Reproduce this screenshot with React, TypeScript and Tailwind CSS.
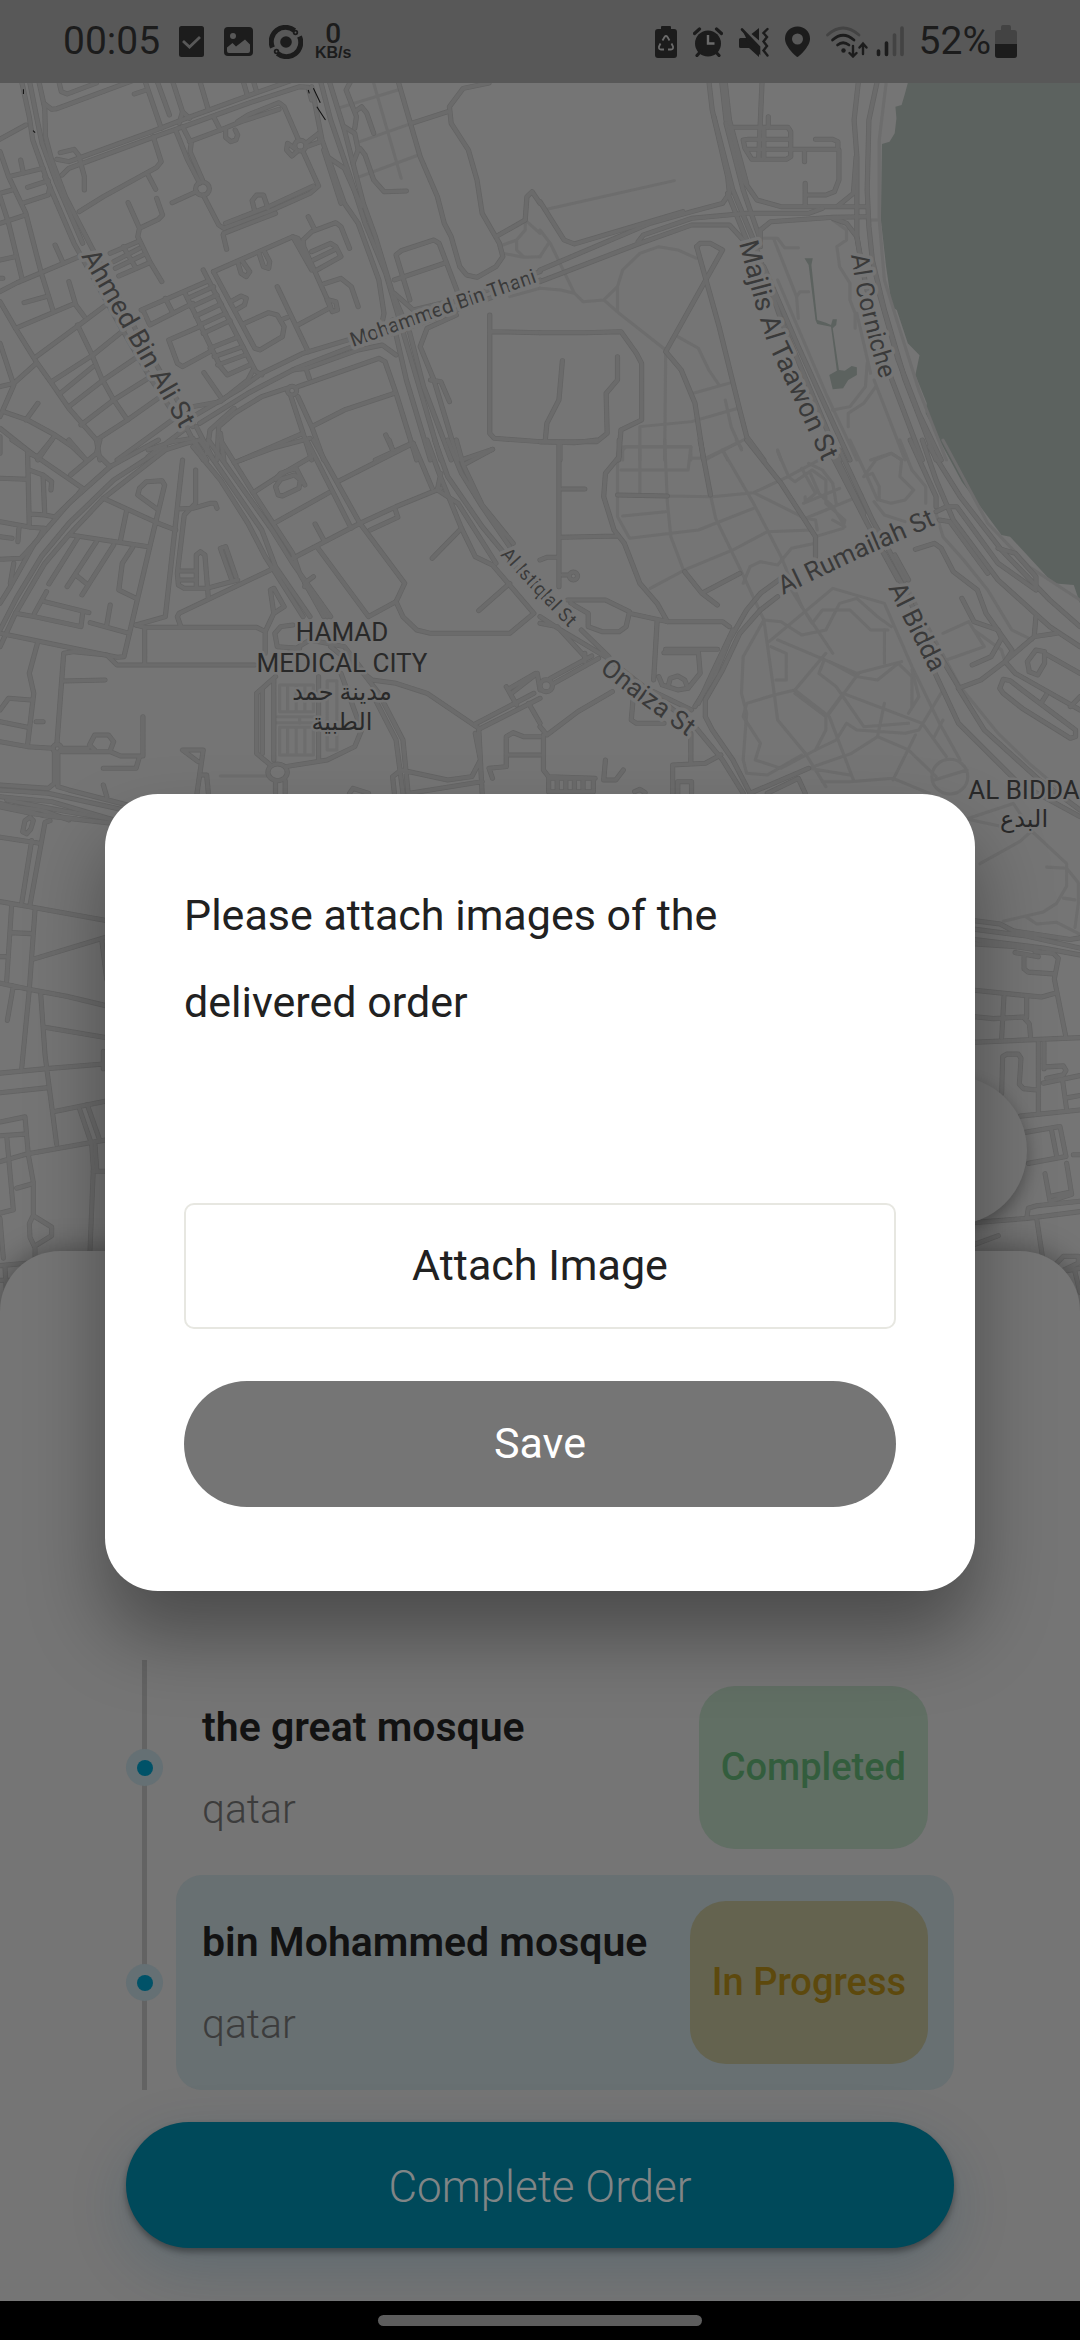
import React from "react";

type Tile = { at: string; roads: string[]; paths: string[] };

const tiles: Tile[] = [
  {
    at: "translate(0 80) scale(.3444 .3333)",
    roads: [
      "M62 0L85 110L95 180L140 310L215 490L350 740L440 900L530 1040",
      "M85 0L108 120L122 190L165 310L240 490",
      "M112 0L130 85L132 170L150 240L190 350L265 500L400 760L560 1040",
      "M-5 180L75 135M0 215L25 290L75 400L120 580L155 695M25 290L125 265M60 240L68 280",
      "M80 322L140 302M0 340L35 330M0 350L25 430L65 600M65 370L140 345L145 320L130 290M0 430L75 405",
      "M0 540L45 530M160 495L183 548M0 635L50 608L120 578L235 528M0 595H8",
      "M70 668L140 648M45 745L218 670M200 605L220 675L245 710",
      "M0 665L45 745L105 845L150 910L200 985L280 1080L290 1140",
      "M105 830L230 735L340 650M225 735L265 820L295 895L330 960L370 1020",
      "M0 790L40 915M0 920L40 910L105 850M40 915L0 1010",
      "M150 905L270 825L360 750M175 940L270 860M200 980L300 900L400 830M235 1035L330 960L430 895M280 1080L370 1020L480 940",
      "M10 995L80 1020L160 1065L210 1100L250 1140M110 970L75 1020M160 1065L110 1140M0 1045L110 1135M0 1070V1120",
      "M128 70L150 88L165 86L390 0M170 0L178 35L195 42L280 9",
      "M420 0L468 145M390 42L425 30M455 0L492 105M500 0L530 95L550 115M530 95L520 130",
      "M165 238L200 245L440 155L540 115L740 40L850 0",
      "M180 285L200 265L450 170L560 130L720 70L870 20L895 22L905 60",
      "M175 218L215 208L228 225L245 290V330M445 170L468 245L455 262L300 350L230 395",
      "M430 285L452 328M372 368L405 445M455 355L472 405L460 418L405 445L400 470L435 545L470 605",
      "M582 9L605 90M705 0L718 45M735 0L745 35M620 110L640 150",
      "M510 150L545 240L580 310M530 140L555 190L552 215L588 300",
      "M550 185L640 150L700 125L810 88M690 125L720 105L810 68L825 80L868 182M655 150V172L670 185L685 180L690 165L683 150",
      "M568 326a20 20 0 1 0 40 0a20 20 0 1 0 -40 0M856 197a16 16 0 1 0 32 0a16 16 0 1 0 -32 0",
      "M500 368L570 335M590 345L635 435L650 445L780 395L900 340L925 318L880 215",
      "M650 460L800 400M655 430L780 380L910 318M740 395L732 362L745 345L765 345L778 385M648 465L658 508",
      "M855 205L835 190L832 210L848 228L862 215M888 190L925 160L930 185L890 200",
      "M320 520L400 485M330 545L405 505M335 565L415 525M345 588L435 548M358 500L395 565",
      "M620 575L850 470L905 570M850 470L865 475L905 570M885 530L880 480L905 455L975 428L990 440L1015 505M895 410L912 445M882 500L960 680",
      "M905 515L960 490L975 500L990 530L920 570M910 540L970 510",
      "M690 545L700 580L715 590L725 575L705 545M752 520L765 560L780 565L783 545L768 515",
      "M940 612L990 595L1020 620L1040 680M950 660L965 695L980 690L975 665L955 660M865 735L955 685M805 620L895 815M815 720L835 712",
      "M620 575L740 805L755 810L820 770L825 740L805 705L780 698L710 730M670 665L700 648L715 655L710 675L685 690",
      "M590 570L740 870M410 690L600 605M535 635L640 860L660 885L725 855M480 655L500 695M415 690L435 735L560 670",
      "M545 655L620 620M555 680L630 645M568 708L642 672M580 735L655 700M590 760L668 722M610 805L690 772M622 830L705 800M632 855L712 825",
      "M580 740L490 780L515 850L530 860L610 815M592 878L640 950M560 980L640 965L720 900L735 870L760 885",
      "M560 1010L700 925L760 880L880 820L1010 780L1100 745L1568 575",
      "M580 1030L720 940L860 865L1010 805L1140 760L1568 600",
      "M850 870L890 865L1040 810L1110 795L1150 825M890 870L898 895",
      "M630 1140L635 1040L680 1000L760 950L832 925M865 920L1100 835L1118 845L1150 940L1195 1090L1210 1140M835 932a13 13 0 1 0 26 0a13 13 0 1 0 -26 0",
      "M845 950L880 1060L905 1140M865 950L905 1040L940 1140M905 1040L1000 990L1145 940M700 1140L880 1060M1120 1065L1140 1110M1090 1140L1195 1090",
      "M600 1120L610 1050L680 985M650 1140L640 1060M430 1130L560 1030M340 1140L500 1020L540 1000M430 1110L500 1085L560 1075L600 1140M540 1040L590 1140M570 1040L620 1140",
      "M905 20L935 180L1000 370L1040 430L1100 600L1115 700L1105 750",
      "M930 0L960 120L1010 270L1060 430L1120 580L1160 720L1200 860L1280 1140",
      "M955 0L1000 150L1055 370L1090 470L1140 640L1190 760L1230 920L1310 1140",
      "M950 230L1000 265L1050 380M940 210L990 370M1140 720L1180 900L1250 1140",
      "M1000 140L1030 160L1040 210L1025 250M1020 0L1005 30L1035 110L1030 145M1030 95L1050 80L1065 100L1085 160M1045 205L1060 225L1085 300L1115 335L1180 333",
      "M1155 0L1220 230L1270 350L1290 430L1310 470L1335 560L1355 585L1385 592L1440 560L1460 530L1450 490L1400 400L1385 300L1360 210L1310 130L1305 80L1345 25L1420 9",
      "M1195 130L1300 95M1440 470L1525 420L1530 350L1545 335L1568 370",
      "M1145 600L1295 548M1190 660L1150 525L1165 512L1260 480L1275 490L1330 640M1145 640L1200 690L1300 665",
      "M1325 705L1240 745L1220 800L1260 900L1330 1140M1250 900L1280 905L1305 965",
      "M1422 705V1060L1435 1075L1568 1085M1425 755L1568 758M1340 1140L1430 1108",
    ],
    paths: [
      "M980 85L1155 30M1045 185L1195 130M1045 290L1215 225M1085 9L1165 295",
      "M1460 495L1500 480L1525 450V420L1568 460M1460 520L1520 532L1568 530M1500 480V510L1520 530M1480 650L1568 625",
    ],
  },
  {
    at: "translate(540 80) scale(.3444 .3333)",
    roads: [
      "M490 0L500 90L545 290L550 340L530 370L440 395L320 430L0 570",
      "M527 0L540 120L590 300L630 360L700 380L950 380M537 0L550 120L600 310",
      "M505 110L560 330L620 480M540 130L590 330L640 480M545 340L600 480",
      "M0 605L290 490L440 435L550 435L590 480M285 485L300 465L440 415L600 400L780 400L820 385",
      "M640 500V450L670 425L850 412L950 410M850 415L890 430L920 470L930 530",
      "M925 0L912 120L920 230V470L935 560L985 800L1110 1140",
      "M980 0L955 120L950 330L955 440L965 540L1000 690L1060 900L1150 1140",
      "M918 230L910 340L865 378M985 640L1040 840L1100 1000L1165 1140",
      "M645 0L635 235M550 142L720 142L728 155V230L715 238L615 238L595 205L590 180L605 178H725M600 208H865V185L850 178H800",
      "M868 210V300L855 335L830 345H775M768 215V245M770 310V378M663 110V140M650 145V235",
      "M0 365L70 480L100 492L415 395",
      "M455 500L465 490H495L530 510L365 815L410 870L450 970L475 1140",
      "M455 500L520 740L580 990L600 1070L650 1140",
      "M0 758H130L235 755L280 820L295 850V1020L235 1050L228 1140M65 842L55 960L20 1030L15 1085M225 830V900L192 940L195 1060L165 1085H0M58 1090V1140",
      "M620 480L700 720L870 1140M650 560L750 800L860 1050L900 1140",
    ],
    paths: [
      "M20 388L390 302M0 450L30 490L100 640L125 665L185 660L230 700L365 810M185 660L225 620V690M225 620L240 570L290 520L345 500L400 510L455 535M0 625L60 630L100 640M0 530L25 490",
      "M365 810L362 1140M400 770L460 805L490 870L520 915M445 940L555 908",
      "M290 1140V1040L440 1025L575 985M240 1140V1100H438V1140M480 1140L600 1075M538 960L555 1040L585 1110M530 1110L545 1140M690 1110L700 1140M960 1140L1020 1120L1050 1140",
      "M680 480L745 650L750 715M650 475H690L710 503H750M745 650L755 635H780M690 600L830 940L920 1140",
      "M850 990L900 980L945 920L950 850M895 1040V1000L940 970L975 920M970 900L1060 1140M850 420L890 450V480L862 500L870 560L900 610V660L915 700V745M920 700L960 880",
      "M1005 9L985 180V420L1000 600L1030 700L1100 930L1180 1140M950 420H980",
    ],
  },
  {
    at: "translate(0 440) scale(.3444 .3333)",
    roads: [
      "M460 0L320 80L200 190L100 310L30 440L0 490",
      "M480 20L330 120L200 250L120 350L50 470L0 570",
      "M580 0L540 10L480 30L300 175L200 285L130 370L45 520L0 620",
      "M580 0L640 90L760 270L800 380L900 530M605 0L680 110L790 270L850 370L960 530M640 0L730 150L850 340L870 400L940 530M560 20L640 120L720 250L770 350L880 530",
      "M680 68L790 25L900 -5M735 158L830 95L905 50M795 250L955 158",
      "M890 0L1020 265M910 0L1045 250M980 125L1200 10M850 355L1045 250L1150 200L1280 145M1075 270L1155 232L1148 210M1045 250L1175 430L1150 485L1070 530M920 320L1070 530M915 252L940 300",
      "M1150 485L1170 530L1210 570L1250 580H1480L1550 520M1255 355L1340 265L1380 350L1430 375L1550 520M1390 512L1480 430",
      "M1240 0L1275 100L1340 265M1200 10L1255 145M1262 0L1300 110L1400 260L1568 470M1300 0L1340 100L1400 200L1480 320M1325 0L1345 75L1430 28M1345 75L1400 195L1490 310M1280 100L1270 150L1330 190L1440 370M1130 0L1140 30",
      "M885 440L890 425L910 410M885 430L950 530M808 165L800 140L815 118L855 105L872 120L868 145L820 168ZM800 118L815 100L860 85L885 135",
      "M80 35L85 260M35 0L240 145L225 165L160 230M0 115L80 118M85 90L125 105L130 225L165 232M125 105L150 125L148 150M90 222L130 225",
      "M0 245L90 262L130 265M0 290L35 295M55 265L52 305M0 358L60 355L110 300L125 270M80 40L110 50L150 0M205 105L280 40M40 370L30 430M290 0L280 40L320 80M200 0L250 60",
      "M300 175L460 250L510 270M460 210L400 165L405 145L425 125L470 122L478 135L435 320L360 650L340 652L0 580M368 210L350 300M205 285L430 320M225 295L142 432M280 305L195 440M330 315L238 465M220 405L250 430M385 322L355 370L345 450L395 475",
      "M530 60L480 530L395 555M568 90V190L535 225L515 400L518 435L535 445H600L690 420M685 410L655 320L640 325L675 425M515 207L560 205L610 190L625 190L630 205M570 440V345L582 335L595 345L605 475M520 393H570M520 420H570",
      "M785 390L520 520L515 530L525 560M395 555L420 562H745L770 575L795 520L785 450L795 445L825 500L795 520M420 565V670M770 575V640M165 915L185 640L215 635L310 645L340 675H740",
      "M130 485L258 518M45 520L100 530L235 560L240 520M135 455L100 520M262 548L375 580M320 495L310 555",
      "M110 605L85 700L98 760L80 915M185 723L305 720M0 810L25 775L90 780M105 845H125M0 845L80 862M0 905L80 920L154 925",
      "M154 925a12 12 0 1 0 24 0a12 12 0 1 0 -24 0M178 925H255M180 935H320L350 948H415V830M260 915L275 885H315L330 905L320 932M260 915L275 930M300 985H395L405 950",
      "M168 940V1040L200 1050L370 1095M158 935V1030L140 1045L0 1035M0 1050L140 1060L360 1110M0 1070L150 1085L330 1140M300 1035L310 1070M0 1095L120 1110L200 1140",
      "M575 965L530 930H590L572 1060M585 1005H600L605 1060M778 997a28 25 0 1 0 56 0a28 25 0 1 0 -56 0M800 1025V1060M828 1022V1060",
      "M785 975L745 940V760L800 710M762 750V940M795 720V960M830 980L950 960L1030 920L1050 870L990 700M925 710V960",
      "M850 555L815 560L798 580L805 620L870 625M820 650L900 600L1000 620L1060 700M960 620L1080 720L1150 730L1240 760L1390 865",
      "M1010 640L1100 760L1170 900L1185 1060M1090 780L1150 900L1170 1060M1390 865L1400 1060M1380 880L1395 960L1370 1010L1300 1020L1165 990L1140 1010L1145 1060M1190 1060L1400 1025",
      "M1390 868L1568 775M1380 852L1550 760M1470 740L1500 795M1485 760L1560 700L1568 750M1480 745L1555 700M1535 790L1568 850",
      "M1430 1015L1420 985L1470 980V890L1490 878L1520 890H1568M1470 945H1568M1015 1060L1025 1045L1070 1060",
    ],
    paths: [
      "M640 1008H775",
      "M812 735H910V815H812ZM835 735V815M860 735V815M885 735V815M812 862H910V945H812ZM835 862V945M860 862V945M885 862V945M950 722H978V930H950ZM800 848H915M805 830H915M870 830V850",
    ],
  },
  {
    at: "translate(540 440) scale(.3444 .3333)",
    roads: [
      "M0 5L100 8L165 0M230 0V50L190 100L185 170L215 270L245 310L290 430L340 490L370 545M55 10V440M65 147H130M58 292L225 288M65 405H85M85 408a12 12 0 1 0 24 0a12 12 0 1 0 -24 0M0 360L20 352H50",
      "M465 0L495 165M225 165L370 168M420 395L470 460L515 495M470 460L580 400M600 0L700 130L800 290V350",
      "M835 20L950 250L1040 420M870 30L965 240L1060 420M860 50L940 220",
      "M1075 0L1150 170V200M1110 0L1150 120L1200 240L1330 420L1480 560L1568 620M1130 20L1220 170L1340 330L1480 480L1568 560",
      "M1150 215L1180 200H1210L1330 370L1440 450M1160 240L1190 245L1300 400M1330 325L1380 340L1440 410V440",
      "M1090 328L1145 310L1165 325L1200 395L1270 450L1295 520L1370 630",
      "M1225 475L1260 545L1330 570L1340 595L1310 650L1255 675M1440 530L1435 590L1350 665L1280 720L1215 745M1435 590L1500 580M1370 635L1350 665L1380 700L1568 810",
      "M1420 690L1415 665L1440 630L1465 635V670L1445 705L1420 695ZM1465 640L1568 700M1335 745L1345 718L1365 722L1400 750L1555 870V890L1540 895L1400 805L1345 760ZM1470 765L1455 790M1568 770L1540 800",
      "M700 415L640 460L600 510L550 600L510 700L450 800",
      "M690 470L640 510L580 580L530 690L480 780V830L500 870L560 960L610 1060M560 570L500 700L460 790",
      "M0 530L60 570L190 650L450 860L530 960L590 1060M0 550L50 560L130 650M120 570L200 650",
      "M80 480H190L260 515L250 560L230 575H180L140 560V520L90 490M260 520L370 545H530L550 560M340 545L330 720M365 628H515M360 638H460L465 700L430 745M345 710L355 735L400 750L430 745M372 740L378 715L400 708L420 720L428 740",
      "M0 737a18 18 0 1 0 36 0a18 18 0 1 0 -36 0M40 730L170 655M30 715L150 648M130 640V665M0 860L20 885L110 815L210 755",
      "M10 885V990L25 1010L160 1015M190 960L185 1020H220L242 990M25 1015H155V1055H25ZM50 1015V1055M75 1015V1055M100 1015V1055M125 1015V1055",
      "M270 780L265 840L280 850H360M438 880V970M385 1060V975L440 972L480 970L525 945M400 1060V1025H440V1060M330 755L440 810M275 1055L290 1048L305 1058",
      "M610 1060L780 985M660 1060L750 1015L770 1060M1030 345L1070 420M1000 340L1050 430L1100 540L1215 740M1120 640L1215 850L1390 1030L1568 1130M1215 745L1230 770L1290 870L1450 1020L1568 1110",
    ],
    paths: [
      "M290 20V160M362 0L370 190L380 290L420 400M235 90H430L438 20H250L230 40M225 40V230L260 295L460 270L620 205M240 228L365 215M370 168L500 170L620 158L720 110L810 60M440 55H480L570 10M320 445L420 390L560 330L660 275L790 270M530 30L620 190L700 350L760 500M495 165L510 235L585 395L650 540",
      "M625 160L770 235L800 240M690 35L720 105M570 0L585 25M720 110L740 125L790 90L830 120V190L885 240L880 265L800 290M760 85L800 160L765 190L870 145M770 185V170M770 235L830 210L935 165M800 240L805 270M590 430L610 380L640 365L690 375L730 325L800 310M785 100L810 160L850 200L880 250M850 240L885 260M780 70L820 90L850 130L860 190",
      "M940 110L975 60L1020 40L1050 60L1045 110L1085 150L1060 180L1020 190L985 180V140L965 100L940 110M970 185L1000 225L1060 245M900 0L950 110L980 180",
      "M1170 0L1300 250L1420 380L1568 480M1045 0L1080 90L1120 140V190M1150 220L1170 290L1230 360L1300 450L1370 570L1430 600",
      "M1170 580L1245 545L1290 620L1180 660M1260 570L1340 630L1350 665",
      "M650 540L680 760L690 840L770 940M650 540L590 650L585 760L600 820L590 960L600 1000L660 1005L760 945M650 540L700 545L760 585L830 570L870 490L920 475L980 530L1020 560",
      "M690 600L920 700L1050 665M760 500L850 640M665 605L850 445L1000 490L1080 680L1160 850L1220 960M730 450L790 550L820 510H900L960 570H1010",
      "M830 640L740 750L680 765L600 790L590 830L640 910L625 960L700 985L800 930L830 870V830L740 760M825 660L810 700L860 740L940 860L1070 850M840 665L920 710L980 720L1040 670L1080 710V800",
      "M740 750L840 830L910 1020M880 760L1110 850L1180 950M925 700L840 820M830 830L880 760M890 850L920 870L1060 880L1100 870L1170 750M1000 570V670M1000 790L980 890L1070 930L1150 1010M1090 885L1025 1020M820 1025H900L1025 1015L1130 1060M780 985L900 1005M780 985L905 940L980 890M670 620L715 640V720H685M890 850L860 900L800 930M1080 690L1100 770L1070 820M1170 840L1145 890M770 940L830 1040",
      "M1138 1010a52 52 0 1 0 104 0a52 52 0 1 0 -104 0M1145 1020L1240 990M1060 430L1220 740L1330 880L1420 970L1500 1040",
    ],
  },
  {
    at: "translate(0 800) scale(.3333 .3444)",
    roads: [
      "M0 10L130 45L360 70M0 20L100 40L230 55M20 0L180 30L330 55M90 50L75 60L68 92L80 98L92 85L100 60Z",
      "M0 108L115 125M150 60L135 65L90 305M90 60M95 118L65 300M0 295L90 310L330 352M35 305L20 525M30 385L95 388M105 320L88 550L65 780M0 455H15M100 462L330 395M305 405L320 520",
      "M0 532L90 550L200 570L330 600M40 540L22 640M122 560L135 740L170 1000M135 660L330 692M0 793L140 780L330 765M310 730V780M0 850L145 835M160 905L330 872",
      "M238 895L275 1000L280 1070L270 1310M262 885L300 990M0 1050L80 1028L270 995L330 985M0 935L75 920L85 1030L100 1110V1205L88 1230L90 1270L105 1300V1330M105 1210L155 1240V1265L105 1295",
      "M0 975L75 970M20 975L40 1190L0 1200M50 1127L95 1115M0 1215L10 1330M0 1352L80 1345M15 1355L20 1450M0 1395H30M280 1078H330M285 1000L290 1070",
    ],
    paths: [],
  },
  {
    at: "translate(960 800) scale(.3333 .3444)",
    roads: [
      "M0 345L120 360L160 380L330 405L360 400M0 370L200 395L360 430M0 400L250 430L360 450M0 415L160 425L230 435",
      "M165 443L235 455M192 450V490L205 500L280 505M225 440L280 445L295 460L283 520L318 690M0 548L170 565L245 572L290 560M132 570L125 690M200 572V630M0 625L100 635L190 630L208 650L212 690",
      "M0 705L360 690M235 705V910M252 705V780M125 852L128 745L140 738H175L183 750L178 825L190 838L230 842M258 775L310 772L318 785L310 798L260 808M250 822L360 800M308 815L320 900M320 865L360 858M180 918L360 900",
      "M195 965L300 948L318 1035L205 1055M275 960L290 1035M255 1085L270 1165M320 1055L335 1145L270 1165M275 1150L325 1140M200 1215L205 1185L230 1178L360 1165M0 1230L200 1215L360 1195M230 1215L248 1330M45 1290L115 1265M290 1345L310 1325L355 1325V1345L300 1370L360 1360M340 1030H360M345 1370L360 1430",
    ],
    paths: [
      "M20 55L160 10L215 90L180 120L60 185M20 55L115 75M215 90L320 185V250L290 300L250 325L130 352M260 195L320 198L355 240V300L345 370M200 340L230 360L290 355L360 390M310 285L345 290",
    ],
  },
];

const streets = [
  { id: "ahmed", name: "Ahmed Bin Ali St", size: 27, d: "M81 256L126 334L198 460" },
  { id: "thani", name: "Mohammed Bin Thani", size: 20, d: "M353 347L440 316L560 274" },
  { id: "majlis", name: "Majlis Al Taawon St", size: 27, d: "M739 243L756 307L768 345L790 391L840 500" },
  { id: "corniche", name: "Al Corniche", size: 25, d: "M851 255L857 293L870 345L895 430" },
  { id: "istiqlal", name: "Al Istiqlal St", size: 19, d: "M500 555L535 593L600 660" },
  { id: "onaiza", name: "Onaiza St", size: 26, d: "M599 671L638 701L718 759" },
  { id: "rumailah", name: "Al Rumailah St", size: 26, d: "M783 595L860 558L960 514" },
  { id: "bidda", name: "Al Bidda", size: 26, d: "M888 588L910 632L950 710" },
];

function TileLines({ kind, color, width }: { kind: "roads" | "paths"; color: string; width: number }) {
  return (
    <g fill="none" stroke={color} strokeWidth={width} strokeLinecap="round" strokeLinejoin="round">
      {tiles.map((tile) => (
        <g key={tile.at} transform={tile.at}>
          {tile[kind].map((d) => (
            <path key={d} d={d} />
          ))}
        </g>
      ))}
    </g>
  );
}

function CityMap() {
  return (
    <svg viewBox="0 83 1080 1240" className="absolute inset-x-0 top-0 w-full" role="img" aria-label="Map of Doha">
      <rect y="83" width="1080" height="1240" fill="#757575" />
      <g transform="translate(540 80) scale(.3444 .3333)" fill="#5c625f">
        <path d="M1068 9L1060 40L1050 75L1032 80L1035 115L1030 160L1015 185L993 192L990 420L1005 560L1022 680L1036 690L1068 790L1102 826L1090 885L1123 970L1120 1000L1192 1140H1580V0Z" />
        <path d="M768 535H792L788 555L805 720L830 728L845 735L850 718H862L860 735L850 745L868 870L885 872L905 858L920 862V885L895 900L880 925L850 928L840 885L862 872L845 740L805 732L800 720L780 555Z" />
      </g>
      <path transform="translate(540 440) scale(.3444 .3333)" fill="#5c625f" d="M1160 0L1225 125L1340 285L1365 290L1490 430L1550 435L1568 490H1580V0Z" />
      <TileLines kind="paths" color="#6d6d6d" width={9} />
      <TileLines kind="roads" color="#636363" width={15} />
      <TileLines kind="roads" color="#6b6b6b" width={11} />
      <g transform="translate(0 80) scale(.3444 .3333)" fill="none" stroke="#111" strokeWidth="3">
        <path d="M910 25L930 68M920 80L945 120M68 28V42M96 152L102 158M895 30L898 40" />
      </g>
      <g fill="#3a3a3a" stroke="#757575" strokeWidth="7" strokeLinejoin="round" paintOrder="stroke" textRendering="geometricPrecision" className="font-['Roboto',sans-serif]">
        {streets.map((s) => (
          <g key={s.id}>
            <path id={s.id} d={s.d} fill="none" stroke="none" />
            <text fontSize={s.size}>
              <textPath href={`#${s.id}`}>{s.name}</textPath>
            </text>
          </g>
        ))}
      </g>
      <g fill="#292929" stroke="#757575" strokeWidth="5" strokeLinejoin="round" paintOrder="stroke" textAnchor="middle" fontSize="26" className="font-['Roboto','DejaVu_Sans',sans-serif]">
        <text x="342" y="641">HAMAD</text>
        <text x="342" y="672">MEDICAL CITY</text>
        <text x="342" y="700" fontSize="24">مدينة حمد</text>
        <text x="342" y="730" fontSize="24">الطبية</text>
        <text x="1024" y="799">AL BIDDA</text>
        <text x="1024" y="827" fontSize="24">البدع</text>
      </g>
    </svg>
  );
}

function StatusBar() {
  return (
    <header className="flex h-[83px] shrink-0 items-center justify-between bg-[#585858] px-[63px] font-['Roboto',sans-serif] text-[#1c1c1c]">
      <div className="flex items-center">
        <time className="w-[116px] text-[39px] leading-none">00:05</time>
        <svg className="h-[31px] w-[25px]" viewBox="0 0 25 31" aria-hidden="true">
          <rect width="25" height="31" rx="2.5" fill="currentColor" />
          <path d="M4 15L10.500 21L21 11" fill="none" stroke="#585858" strokeWidth="2.800" />
        </svg>
        <svg className="ml-5 h-[29px] w-[29px]" viewBox="0 0 29 29" aria-hidden="true">
          <rect width="29" height="29" rx="4" fill="currentColor" />
          <circle cx="9" cy="9" r="3" fill="#585858" />
          <path d="M3 20.500L8.500 16L12 19.500L21 12.500L26 17.500V24Q26 26 24 26H5Q3 26 3 24Z" fill="#585858" />
        </svg>
        <svg className="ml-4 h-[34px] w-[34px]" viewBox="0 0 34 34" aria-hidden="true">
          <g fill="none" stroke="currentColor" strokeWidth="5">
            <path d="M3.500 22.500A14.300 14.300 0 0 1 25.500 5.500" />
            <path d="M30.500 11.500A14.300 14.300 0 0 1 8.500 28.500" />
          </g>
          <circle cx="17" cy="17" r="5.800" fill="currentColor" />
          <circle cx="26.500" cy="7.500" r="1.800" fill="#585858" stroke="currentColor" strokeWidth="1.800" />
          <circle cx="7.500" cy="26.500" r="1.800" fill="#585858" stroke="currentColor" strokeWidth="1.800" />
        </svg>
        <div className="ml-3 flex flex-col items-center">
          <span className="text-[28px] leading-[23px] font-medium">0</span>
          <span className="font-['Liberation_Sans',sans-serif] text-[16px] leading-[16px] font-bold">KB/s</span>
        </div>
      </div>
      <div className="flex items-center">
        <svg className="h-[33px] w-[22px]" viewBox="0 0 22 33" aria-hidden="true">
          <path d="M6 4V2Q6 1 7 1H15Q16 1 16 2V4H19Q22 4 22 7V30Q22 33 19 33H3Q0 33 0 30V7Q0 4 3 4Z" fill="currentColor" />
          <g fill="none" stroke="#6b6b6b" strokeWidth="1.800">
            <path d="M7.500 15.500L9.500 12Q11 10 12.500 12L14.500 15.500M16.500 18.500L18 21.500Q18.500 24.500 16 24.500H13M9 24.500H6Q3.500 24.500 4 21.500L5.500 18.500" />
          </g>
        </svg>
        <svg className="ml-4 h-[30px] w-[30px]" viewBox="0 0 30 30" aria-hidden="true">
          <circle cx="15" cy="16.500" r="13" fill="currentColor" />
          <path d="M1.500 6.500L6.500 2M28.500 6.500L23.500 2M4 28.500L8 24M26 28.500L22 24" stroke="currentColor" strokeWidth="3.200" strokeLinecap="round" />
          <path d="M15 8V16.500H21.500" fill="none" stroke="#6b6b6b" strokeWidth="2.400" />
        </svg>
        <svg className="ml-4 h-[30px] w-[30px]" viewBox="0 0 30 30" aria-hidden="true">
          <path d="M12.500 7L20 1V13.500ZM1.500 11H8L20 23V30L10 21H1.500Q0 21 0 19.500V12.500Q0 11 1.500 11Z" fill="currentColor" />
          <path d="M3 2.500L20 20V25L8 13" fill="currentColor" stroke="currentColor" strokeWidth="2.600" strokeLinecap="round" />
          <path d="M28.500 2L24.500 6L28 10L24.500 14.500L28 19L24.500 23.500L28.500 28.500" fill="none" stroke="currentColor" strokeWidth="2.400" strokeLinecap="round" />
        </svg>
        <svg className="ml-4 h-[31px] w-[25px]" viewBox="0 0 25 31" aria-hidden="true">
          <path fillRule="evenodd" d="M12.500 0.500A12.300 12.300 0 0 1 25 13C25 20 15 30 12.500 31C10 30 0 20 0 13A12.300 12.300 0 0 1 12.500 0.500ZM12.500 7.500A5.500 5.500 0 1 0 12.500 18.500A5.500 5.500 0 1 0 12.500 7.500Z" fill="currentColor" />
        </svg>
        <svg className="ml-4 h-[32px] w-[42px]" viewBox="0 0 42 32" aria-hidden="true">
          <g fill="none" stroke="currentColor" strokeWidth="2.700" strokeLinecap="round">
            <path d="M1.500 9Q17 -5 33 9" stroke="#434343" />
            <path d="M6.500 14Q17 4.500 28 14M11.500 19Q17 14.500 23 19" />
            <path d="M27 20V30M23.500 27L27 30.500L30.500 27M37 28V18M33.500 21.500L37 17.500L40.500 21.500" strokeWidth="2.400" />
          </g>
          <circle cx="17.500" cy="24.500" r="2.200" fill="currentColor" />
        </svg>
        <svg className="ml-2 h-[31px] w-[29px]" viewBox="0 0 29 31" aria-hidden="true">
          <g stroke="currentColor" strokeWidth="3.600" strokeLinecap="round">
            <path d="M2.500 25V28.500M10.500 17V28.500" />
            <path d="M18.500 9V28.500M26 2V28.500" stroke="#434343" />
          </g>
        </svg>
        <span className="ml-[14px] text-[39px] leading-none">52%</span>
        <svg className="ml-1 h-[33px] w-[22px]" viewBox="0 0 22 33" aria-hidden="true">
          <path d="M6 5V2Q6 0 8 0H14Q16 0 16 2V5H19Q22 5 22 8V30Q22 33 19 33H3Q0 33 0 30V8Q0 5 3 5Z" fill="#434343" />
          <path d="M0 19H22V30Q22 33 19 33H3Q0 33 0 30Z" fill="currentColor" />
        </svg>
      </div>
    </header>
  );
}

const stops = [
  { title: "the great mosque", place: "qatar", status: "Completed", row: "", badge: "bg-[#616f64] text-[#335d3d]" },
  { title: "bin Mohammed mosque", place: "qatar", status: "In Progress", row: "bg-[#687072]", badge: "bg-[#64634f] text-[#5d490d]" },
];

function OrderSheet() {
  return (
    <section className="relative rounded-t-[60px] bg-[#757575] px-[126px] pt-[409px] pb-[53px] shadow-[0_0_30px_rgba(0,0,0,0.4)]">
      <ol>
        {stops.map((stop) => (
          <li key={stop.title} className="flex items-stretch">
            <div className="relative flex w-[37px] shrink-0 items-center justify-center">
              <span className="absolute inset-y-0 left-4 w-[5px] bg-[#636363]" />
              <span className="relative flex size-[37px] items-center justify-center rounded-full bg-[#657074]">
                <span className="size-4 rounded-full bg-[#005268]" />
              </span>
            </div>
            <div className={`ml-[13px] flex h-[215px] min-w-0 flex-1 items-center justify-between rounded-[26px] px-[26px] ${stop.row}`}>
              <div>
                <h2 className="text-[41px] leading-[82px] font-semibold whitespace-nowrap text-[#121212]">{stop.title}</h2>
                <p className="text-[41px] leading-[82px] font-light text-[#3c3c3c]">{stop.place}</p>
              </div>
              <span className={`flex h-[163px] items-center rounded-[36px] px-[22px] text-[38px] font-medium whitespace-nowrap ${stop.badge}`}>{stop.status}</span>
            </div>
          </li>
        ))}
      </ol>
      <button type="button" className="mt-8 h-[126px] w-full rounded-full bg-[#00495a] pt-1 text-[44px] font-light text-[#808586] shadow-[0_4px_6px_rgba(0,0,0,0.35),0_20px_60px_rgba(0,60,90,0.2)]">
        Complete Order
      </button>
    </section>
  );
}

function AttachDialog() {
  return (
    <div className="absolute inset-0 flex items-center px-[105px]">
      <div role="dialog" aria-modal="true" aria-labelledby="attach-title" className="w-full rounded-[53px] bg-white px-[79px] pt-[78px] pb-[84px] text-[#212121] shadow-[0_44px_76px_rgba(0,0,0,0.36)]">
        <h1 id="attach-title" className="max-w-[600px] text-[43px] leading-[87px]">
          Please attach images of the delivered order
        </h1>
        <button type="button" className="mt-[157px] h-[126px] w-full rounded-[10px] border-2 border-[#e7e7e1] text-[43px]">
          Attach Image
        </button>
        <button type="button" className="mt-[52px] h-[126px] w-full rounded-full bg-[#757575] text-[43px] text-white">
          Save
        </button>
      </div>
    </div>
  );
}

export default function App() {
  return (
    <div className="flex min-h-screen flex-col bg-black font-['Roboto',sans-serif]">
      <StatusBar />
      <main className="relative flex flex-1 flex-col justify-end overflow-hidden bg-[#757575]">
        <CityMap />
        <button type="button" aria-label="My location" className="absolute right-[53px] bottom-[1076px] size-[149px] rounded-full bg-[#757575] shadow-[0_6px_16px_rgba(0,0,0,0.3)]" />
        <OrderSheet />
        <AttachDialog />
      </main>
      <footer className="flex h-[39px] shrink-0 items-center justify-center bg-black">
        <span className="h-[11px] w-[324px] rounded-full bg-[#5d5d5d]" />
      </footer>
    </div>
  );
}
